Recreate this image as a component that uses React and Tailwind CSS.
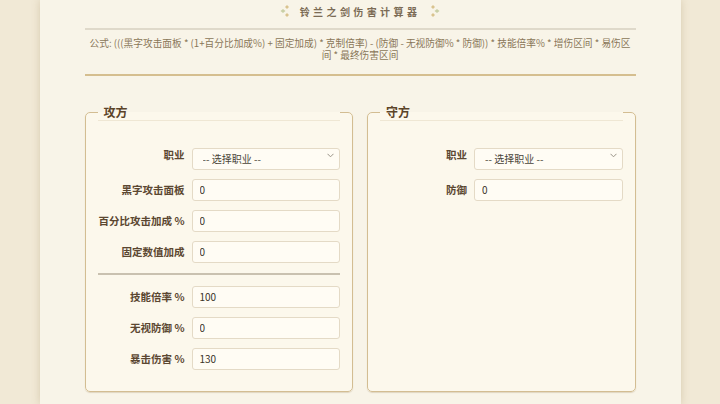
import { useState } from 'react';

const font = { fontFamily: '"Noto Sans CJK SC", "Noto Sans", sans-serif' };

function Flourish({ flip }) {
  return (
    <svg width="10" height="14" viewBox="0 0 10 14" className={flip ? 'scale-x-[-1]' : ''}>
      <path d="M7 1 L9 3 L7 5 L5 3 Z" fill="#d9c38f" />
      <path d="M3 5 L5.5 7 L3 9 L0.5 7 Z" fill="#c9cfa6" />
      <path d="M7 9 L9 11 L7 13 L5 11 Z" fill="#d9c38f" />
    </svg>
  );
}

function Field({ label, value, onChange }) {
  return (
    <>
      <label className="text-right text-[10.5px] font-bold text-[#5b4731] leading-[22px] pr-[7px] whitespace-nowrap">
        {label}
      </label>
      <input
        value={value}
        onChange={(e) => onChange(e.target.value)}
        className="h-[22px] w-full rounded-[3px] border border-[#e4dac6] bg-[#fffcf4] px-[7px] text-[10px] text-[#3a3328] outline-none"
      />
    </>
  );
}

function JobSelect({ label }) {
  return (
    <>
      <label className="text-right text-[10.5px] font-bold text-[#5b4731] leading-[22px] pr-[7px]">{label}</label>
      <div className="relative">
        <select className="h-[22px] w-full appearance-none rounded-[3px] border border-[#e4dac6] bg-[#fffcf4] pl-[10px] text-[10px] text-[#4a4438] outline-none">
          <option>-- 选择职业 --</option>
        </select>
        <svg
          width="7"
          height="5"
          viewBox="0 0 7 5"
          className="pointer-events-none absolute right-[6px] top-[9px]"
        >
          <path d="M0.5 0.8 L3.5 3.8 L6.5 0.8" stroke="#9a9488" strokeWidth="1" fill="none" />
        </svg>
      </div>
    </>
  );
}

function Panel({ title, children }) {
  return (
    <fieldset className="rounded-[5px] border border-[#d3bd92] bg-[#fcf8ec] px-3 pt-[23px] pb-[21px] shadow-[0_1px_1px_rgba(150,120,70,0.25)]">
      <legend className="w-full border-b border-[#efe7d4] pl-[6px] text-[12px] font-bold leading-[17px] text-[#5b4328]">
        {title}
      </legend>
      {children}
    </fieldset>
  );
}

export default function App() {
  const [atk, setAtk] = useState({ base: '0', pct: '0', flat: '0', skill: '100', ignore: '0', crit: '130' });
  const [def, setDef] = useState('0');
  const set = (k) => (v) => setAtk({ ...atk, [k]: v });

  return (
    <div className="flex h-[404px] justify-center overflow-hidden bg-[#f1e9d6]" style={font}>
      <div className="w-[641px] bg-[#f8f4e8] px-[45px] pt-[2px] shadow-[0_0_8px_rgba(140,110,60,0.25)]">
        <div className="flex h-[18px] items-center justify-center gap-[10px]">
          <Flourish />
          <h1 className="text-[10px] font-bold tracking-[3.4px] text-[#7b6b55]">铃兰之剑伤害计算器</h1>
          <Flourish flip />
        </div>
        <div className="mt-[8px] h-[2px] bg-[#dfd9ca]" />
        <p className="mt-[8px] whitespace-nowrap text-center text-[9.7px] leading-[11.5px] text-[#8a7759]">
          公式: (((黑字攻击面板 * (1+百分比加成%) + 固定加成) * 克制倍率) - (防御 - 无视防御% * 防御)) * 技能倍率% * 增伤区间 * 易伤区
          <br />
          间 * 最终伤害区间
        </p>
        <div className="mt-[13px] h-[2px] bg-[#d5be8f]" />

        <div className="mt-[27px] grid grid-cols-2 gap-[14px]">
          <Panel title="攻方">
            <div className="grid grid-cols-[94px_1fr] gap-y-[9px]">
              <JobSelect label="职业" />
              <Field label="黑字攻击面板" value={atk.base} onChange={set('base')} />
              <Field label="百分比攻击加成 %" value={atk.pct} onChange={set('pct')} />
              <Field label="固定数值加成" value={atk.flat} onChange={set('flat')} />
            </div>
            <div className="mt-[10px] mb-[11px] h-[2px] bg-[#c9c1b0]" />
            <div className="grid grid-cols-[94px_1fr] gap-y-[9px]">
              <Field label="技能倍率 %" value={atk.skill} onChange={set('skill')} />
              <Field label="无视防御 %" value={atk.ignore} onChange={set('ignore')} />
              <Field label="暴击伤害 %" value={atk.crit} onChange={set('crit')} />
            </div>
          </Panel>
          <Panel title="守方">
            <div className="grid grid-cols-[94px_1fr] gap-y-[9px]">
              <JobSelect label="职业" />
              <Field label="防御" value={def} onChange={setDef} />
            </div>
          </Panel>
        </div>
      </div>
    </div>
  );
}
